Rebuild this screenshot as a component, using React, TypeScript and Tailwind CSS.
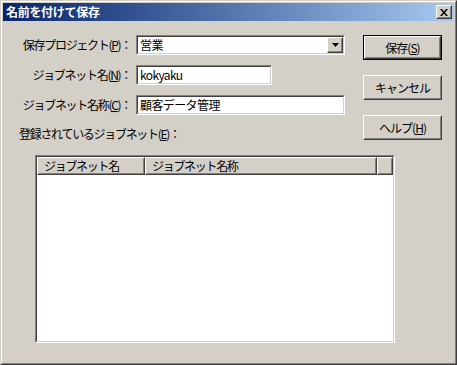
import React from 'react';

const FONT = '"Noto Sans CJK JP", "Liberation Sans", sans-serif';

const sunkenOuter = 'border border-t-[#808080] border-l-[#808080] border-r-white border-b-white';
const sunkenInner = 'border border-t-[#404040] border-l-[#404040] border-r-[#d4d0c8] border-b-[#d4d0c8]';
const raisedOuter = 'border border-t-white border-l-white border-r-[#404040] border-b-[#404040]';
const raisedInner = 'border border-t-[#d4d0c8] border-l-[#d4d0c8] border-r-[#808080] border-b-[#808080]';

// Win2000 style text field
const Field: React.FC<{ width: string; children?: React.ReactNode; combo?: boolean }> = ({ width, children, combo }) => (
  <div className={`${width} h-[20px] ${sunkenOuter}`}>
    <div className={`h-full bg-white flex items-center ${sunkenInner}`}>
      <span className="flex-1 pl-[2px] text-[12px] tracking-[-0.6px] leading-none text-black whitespace-nowrap">{children}</span>
      {combo && (
        <div className={`w-[16px] h-full bg-[#d4d0c8] ${raisedOuter}`}>
          <div className={`h-full flex items-center justify-center ${raisedInner}`}>
            <svg width="7" height="4" viewBox="0 0 7 4">
              <path d="M0 0h7L3.5 4z" fill="#000" />
            </svg>
          </div>
        </div>
      )}
    </div>
  </div>
);

const Label: React.FC<{ text: string; mn: string }> = ({ text, mn }) => (
  <div className="flex items-center justify-end text-[12px] tracking-[-1.3px] text-black whitespace-nowrap">
    {text}(<span className="underline">{mn}</span>)：
  </div>
);

const Button: React.FC<{ label: string; mn?: string; isDefault?: boolean }> = ({ label, mn, isDefault }) => (
  <div className={`w-[79px] h-[25px] ${isDefault ? 'border border-black' : ''}`}>
    <div className={`h-full bg-[#d4d0c8] ${raisedOuter}`}>
      <div className={`h-full flex items-center justify-center text-[12px] tracking-[-1px] text-black ${raisedInner}`}>
        {label}
        {mn && (
          <>
            (<span className="underline">{mn}</span>)
          </>
        )}
      </div>
    </div>
  </div>
);

const HeaderCell: React.FC<{ width: string; text?: string }> = ({ width, text }) => (
  <div className={`${width} h-full bg-[#d4d0c8] ${raisedOuter}`}>
    <div className="h-full flex items-center pl-[5px] text-[12px] tracking-[-1.3px] text-black whitespace-nowrap border border-t-[#d4d0c8] border-l-[#d4d0c8] border-r-[#808080] border-b-[#808080]">
      {text}
    </div>
  </div>
);

export default function App() {
  return (
    <div
      className="w-[457px] h-[365px] bg-[#d4d0c8] border border-t-[#d4d0c8] border-l-[#d4d0c8] border-r-[#404040] border-b-[#404040]"
      style={{ fontFamily: FONT }}
    >
      <div className="h-full flex flex-col p-px border border-t-white border-l-white border-r-[#808080] border-b-[#808080]">
        {/* title bar */}
        <div className="h-[18px] flex items-center justify-between pl-[3px] pr-[2px] bg-gradient-to-r from-[#0a246a] to-[#a6caf0]">
          <span className="text-white font-bold text-[12px] tracking-[-0.3px] leading-none">名前を付けて保存</span>
          <div className={`w-[16px] h-[14px] bg-[#d4d0c8] ${raisedOuter}`}>
            <div className={`h-full flex items-center justify-center ${raisedInner}`}>
              <svg width="8" height="7" viewBox="0 0 8 7">
                <path d="M0 0h2l2 2.5L6 0h2L5 3.5 8 7H6L4 4.5 2 7H0l3-3.5z" fill="#000" />
              </svg>
            </div>
          </div>
        </div>

        <div className="flex flex-1 pt-[14px]">
          {/* left side */}
          <div className="w-[360px] flex flex-col">
            <div className="grid grid-cols-[128px_auto] gap-x-[5px] gap-y-[10px]">
              <Label text="保存プロジェクト" mn="P" />
              <Field width="w-[209px]" combo>
                営業
              </Field>
              <Label text="ジョブネット名" mn="N" />
              <Field width="w-[136px]">kokyaku</Field>
              <Label text="ジョブネット名称" mn="C" />
              <Field width="w-[209px]">顧客データ管理</Field>
            </div>

            <div className="ml-[16px] mt-[11px] h-[15px] flex items-center text-[12px] tracking-[-1.3px] text-black whitespace-nowrap">
              登録されているジョブネット(<span className="underline">E</span>)：
            </div>

            <div className={`ml-[32px] mt-[14px] w-[360px] h-[188px] ${sunkenOuter}`}>
              <div className={`h-full bg-white flex flex-col ${sunkenInner}`}>
                <div className="h-[18px] flex">
                  <HeaderCell width="w-[108px]" text="ジョブネット名" />
                  <HeaderCell width="w-[232px]" text="ジョブネット名称" />
                  <HeaderCell width="flex-1" />
                </div>
              </div>
            </div>
          </div>

          {/* buttons */}
          <div className="flex flex-col gap-[15px]">
            <Button label="保存" mn="S" isDefault />
            <Button label="キャンセル" />
            <Button label="ヘルプ" mn="H" />
          </div>
        </div>
      </div>
    </div>
  );
}
